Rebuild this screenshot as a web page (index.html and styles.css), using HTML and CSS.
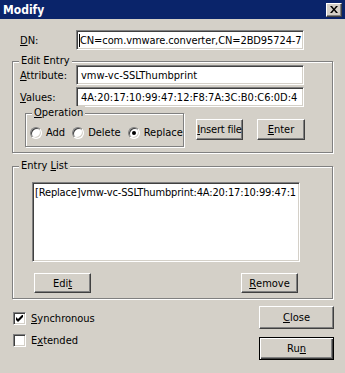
FILE: index.html
```html
<!DOCTYPE html>
<html>
<head>
    <title>Modify</title>
    <link rel="stylesheet" href="styles.css">
</head>
<body>
<div class="window">
    <div class="titlebar">
        <span class="title">Modify</span>
        <div class="close-box">
            <svg width="8" height="7" viewBox="0 0 8 7">
                <path d="M0 0h2l2 2.5 2-2.5h2l-3 3.5 3 3.5h-2l-2-2.5-2 2.5h-2l3-3.5z" fill="#000"/>
            </svg>
        </div>
    </div>

    <div class="row dn-row">
        <label class="lbl"><u>D</u>N:</label>
        <div class="edit dn-edit"><span class="caret"></span>CN=com.vmware.converter,CN=2BD95724-7</div>
    </div>

    <!-- Edit Entry -->
    <div class="group edit-entry">
        <span class="legend">Edit Entry</span>
        <div class="row">
            <label class="lbl"><u>A</u>ttribute:</label>
            <div class="edit">vmw-vc-SSLThumbprint</div>
        </div>
        <div class="row">
            <label class="lbl"><u>V</u>alues:</label>
            <div class="edit">4A:20:17:10:99:47:12:F8:7A:3C:B0:C6:0D:4</div>
        </div>
        <div class="op-row">
            <div class="group operation">
                <span class="legend"><u>O</u>peration</span>
                <div class="radios">
                    <div class="radio"><span class="circle"></span>Add</div>
                    <div class="radio"><span class="circle"></span>Delete</div>
                    <div class="radio"><span class="circle checked"></span>Replace</div>
                </div>
            </div>
            <div class="btn btn-insert"><u>I</u>nsert file</div>
            <div class="btn btn-enter"><u>E</u>nter</div>
        </div>
    </div>

    <!-- Entry List -->
    <div class="group entry-list">
        <span class="legend">Entry <u>L</u>ist</span>
        <div class="listbox">[Replace]vmw-vc-SSLThumbprint:4A:20:17:10:99:47:1</div>
        <div class="list-buttons">
            <div class="btn btn-small">Edi<u>t</u></div>
            <div class="btn btn-small"><u>R</u>emove</div>
        </div>
    </div>

    <div class="bottom">
        <div class="checks">
            <div class="check">
                <span class="box">
                    <svg width="7" height="7" viewBox="0 0 7 7">
                        <path d="M0 2v3l2 2 5-5v-3l-5 5z" fill="#000"/>
                    </svg>
                </span>
                <u>S</u>ynchronous
            </div>
            <div class="check">
                <span class="box"></span>
                E<u>x</u>tended
            </div>
        </div>
        <div class="actions">
            <div class="btn btn-wide"><u>C</u>lose</div>
            <div class="btn btn-wide btn-default">Ru<u>n</u></div>
        </div>
    </div>
</div>
</body>
</html>
```

FILE: styles.css
```css
* {
    box-sizing: border-box;
}

body {
    margin: 0;
    background-color: #D4D0C8;
    font-family: "DejaVu Sans Condensed", "DejaVu Sans", sans-serif;
    font-stretch: condensed;
    font-size: 11px;
    color: #000;
}

u {
    text-decoration: underline;
    text-underline-offset: 1px;
}

.window {
    width: 345px;
    height: 373px;
    overflow: hidden;
}

/* title bar */
.titlebar {
    height: 19px;
    background-color: #0A246A;
    display: flex;
    align-items: center;
    justify-content: space-between;
    padding: 0 3px 0 3px;
}

.title {
    color: #fff;
    font-weight: bold;
    font-size: 12px;
}

.close-box {
    width: 16px;
    height: 14px;
    background-color: #D4D0C8;
    border: 1px solid;
    border-color: #fff #404040 #404040 #fff;
    box-shadow: inset -1px -1px 0 #808080;
    display: flex;
    align-items: center;
    justify-content: center;
}

/* rows with label + edit field */
.row {
    display: flex;
    align-items: center;
    height: 20px;
}

.lbl {
    width: 56px;
}

.dn-row {
    margin-top: 11px;
    padding-left: 20px;
}

.edit {
    width: 228px;
    height: 20px;
    background-color: #fff;
    border: 1px solid;
    border-color: #808080 #fff #fff #808080;
    box-shadow: inset 1px 1px 0 #404040, inset -1px -1px 0 #D4D0C8;
    padding: 3px 2px 0 4px;
    white-space: nowrap;
    overflow: hidden;
    line-height: 13px;
}

.dn-edit {
    text-indent: -2px;
    letter-spacing: -0.1px;
}

.caret {
    display: inline-block;
    width: 1px;
    height: 13px;
    background-color: #000;
    vertical-align: top;
}

/* group boxes */
.group {
    position: relative;
    border: 1px solid #808080;
    box-shadow: inset 1px 1px 0 #fff, 1px 1px 0 #fff;
}

.legend {
    position: absolute;
    top: -8px;
    left: 6px;
    padding: 0 2px;
    line-height: 13px;
    background-color: #D4D0C8;
}

.edit-entry {
    margin: 11px 0 0 12px;
    width: 321px;
    padding: 3px 0 5px 7px;
}

.edit-entry .row + .row {
    margin-top: 2px;
}

.op-row {
    display: flex;
    align-items: flex-start;
    margin: 6px 0 0 5px;
}

.operation {
    width: 159px;
    height: 34px;
    padding: 12px 0 0 4px;
}

.radios {
    display: flex;
    align-items: center;
}

.radio {
    display: flex;
    align-items: center;
    margin-right: 7px;
}

.circle {
    position: relative;
    width: 12px;
    height: 12px;
    border-radius: 50%;
    background-color: #fff;
    border: 1px solid;
    border-color: #808080 #fff #fff #808080;
    box-shadow: inset 1px 1px 0 #404040, inset -1px -1px 0 #D4D0C8;
    margin-right: 4px;
}

.checked::after {
    content: "";
    position: absolute;
    left: 3px;
    top: 3px;
    width: 4px;
    height: 4px;
    border-radius: 50%;
    background-color: #000;
}

/* buttons */
.btn {
    height: 21px;
    background-color: #D4D0C8;
    border: 1px solid;
    border-color: #fff #404040 #404040 #fff;
    box-shadow: inset -1px -1px 0 #808080;
    display: flex;
    align-items: center;
    justify-content: center;
    white-space: nowrap;
}

.btn-insert {
    width: 47px;
    margin: 6px 0 0 12px;
    letter-spacing: -0.2px;
}

.btn-enter {
    width: 48px;
    margin: 6px 0 0 14px;
}

/* Entry List */
.entry-list {
    margin: 13px 0 0 12px;
    width: 321px;
    padding: 15px 0 5px 19px;
}

.listbox {
    width: 268px;
    height: 80px;
    background-color: #fff;
    border: 1px solid;
    border-color: #808080 #fff #fff #808080;
    box-shadow: inset 1px 1px 0 #404040, inset -1px -1px 0 #D4D0C8;
    padding: 3px 1px 3px 2px;
    white-space: nowrap;
    overflow: hidden;
    line-height: 13px;
    letter-spacing: -0.15px;
}

.list-buttons {
    display: flex;
    justify-content: space-between;
    width: 268px;
    padding: 0 2px;
    margin-top: 11px;
}

.btn-small {
    width: 57px;
    height: 20px;
}

/* bottom */
.bottom {
    display: flex;
    justify-content: space-between;
    width: 334px;
    padding-left: 13px;
    margin-top: 7px;
}

.checks {
    padding-top: 6px;
}

.check {
    display: flex;
    align-items: center;
    height: 13px;
    margin-bottom: 9px;
}

.box {
    width: 13px;
    height: 13px;
    background-color: #fff;
    border: 1px solid;
    border-color: #808080 #fff #fff #808080;
    box-shadow: inset 1px 1px 0 #404040, inset -1px -1px 0 #D4D0C8;
    margin-right: 5px;
    display: flex;
    align-items: center;
    justify-content: center;
}

.actions {
    display: flex;
    flex-direction: column;
    gap: 8px;
}

.btn-wide {
    width: 75px;
    height: 23px;
}

.btn-default {
    border-color: #000;
    box-shadow: inset 1px 1px 0 #fff, inset -1px -1px 0 #404040, inset -2px -2px 0 #808080;
}
```
